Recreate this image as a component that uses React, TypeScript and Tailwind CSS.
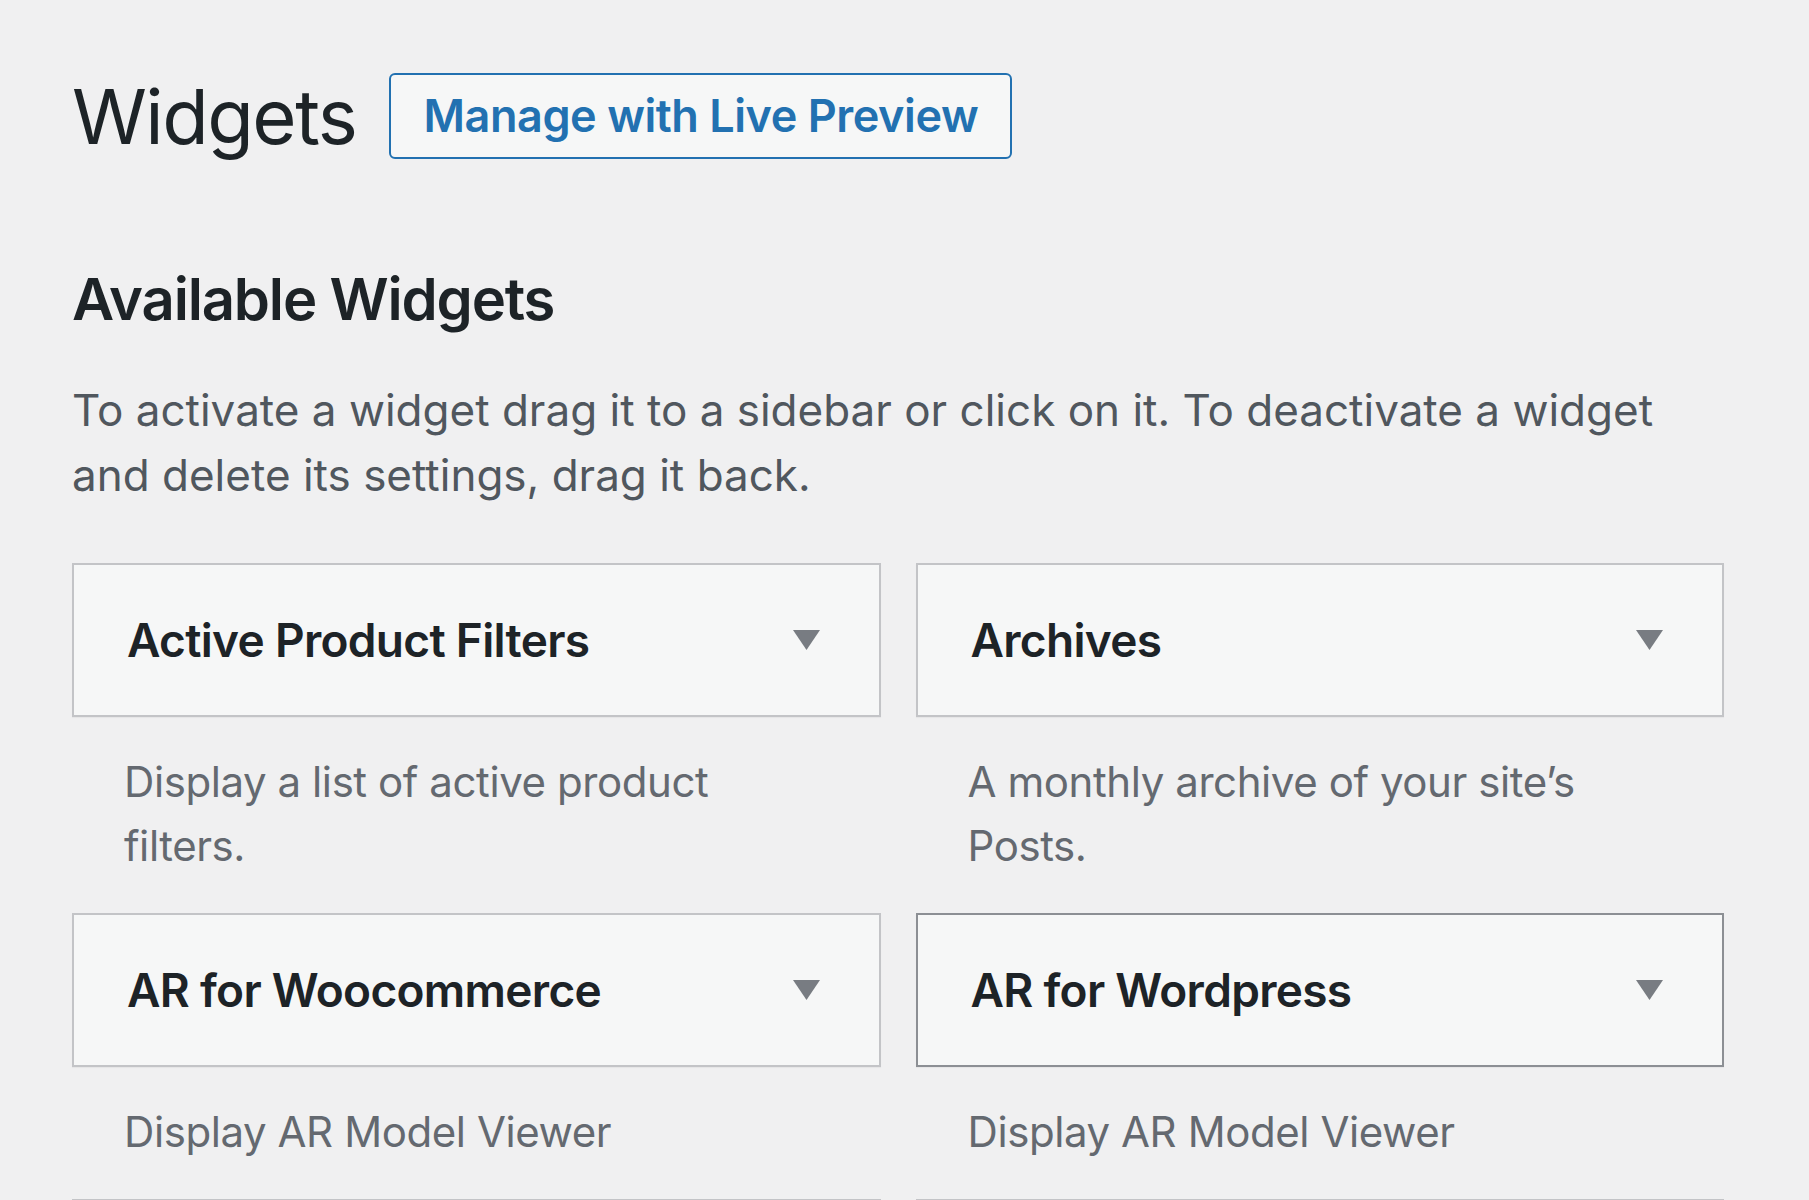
const widgets = [
  { title: "Active Product Filters", desc: "Display a list of active product filters." },
  { title: "Archives", desc: "A monthly archive of your site\u2019s Posts." },
  { title: "AR for Woocommerce", desc: "Display AR Model Viewer" },
  { title: "AR for Wordpress", desc: "Display AR Model Viewer", hover: true },
  { title: "Audio", desc: "Displays an audio player." },
  { title: "Calendar", desc: "A calendar of your site\u2019s Posts." },
];

function Arrow() {
  return (
    <svg width="27" height="20" viewBox="0 0 27 20" className="shrink-0">
      <polygon points="0,0 27,0 13.5,20" fill="#787c82" />
    </svg>
  );
}

function WidgetItem({ title, desc, hover }: { title: string; desc: string; hover?: boolean }) {
  return (
    <div>
      <div
        className={`flex h-[154px] items-center justify-between border-2 bg-[#f6f7f7] pl-[53px] pr-[59px] shadow-[0_1px_1px_rgba(0,0,0,0.04)] ${
          hover ? "border-[#8c8f94]" : "border-[#c3c4c7]"
        }`}
      >
        <h3 className="text-[46px] font-semibold tracking-[-0.015em] text-[#1d2327]">{title}</h3>
        <Arrow />
      </div>
      <p className="pl-[52px] pr-[60px] pt-[33px] pb-[35px] text-[42px] leading-[64px] tracking-[-0.01em] text-[#646970]">
        {desc}
      </p>
    </div>
  );
}

export default function App() {
  return (
    <div className="min-h-screen bg-[#f0f0f1] pl-[72px] pt-[73px] font-['Inter','Noto_Sans',sans-serif] text-[#3c434a]">
      <div className="flex h-[86px] items-center gap-[33px]">
        <h1 className="text-[76px] font-normal leading-none tracking-[-0.02em] text-[#1d2327]">Widgets</h1>
        <button className="h-[86px] w-[623px] rounded-[6px] border-2 border-[#2271b1] bg-[#f6f7f7] text-[45px] font-semibold tracking-[-0.01em] text-[#2271b1]">
          Manage with Live Preview
        </button>
      </div>

      <h2 className="mt-[103px] text-[58px] font-semibold leading-[74px] tracking-[-0.02em] text-[#1d2327]">
        Available Widgets
      </h2>
      <p className="mt-[42px] w-[1652px] text-[44px] leading-[65px] text-[#50575e]">
        To activate a widget drag it to a sidebar or click on it. To deactivate a widget and delete its settings, drag it back.
      </p>

      <div className="mt-[55px] grid w-[1652px] grid-cols-2 gap-x-[35px]">
        {widgets.map((w) => (
          <WidgetItem key={w.title} title={w.title} desc={w.desc} hover={w.hover} />
        ))}
      </div>
    </div>
  );
}
